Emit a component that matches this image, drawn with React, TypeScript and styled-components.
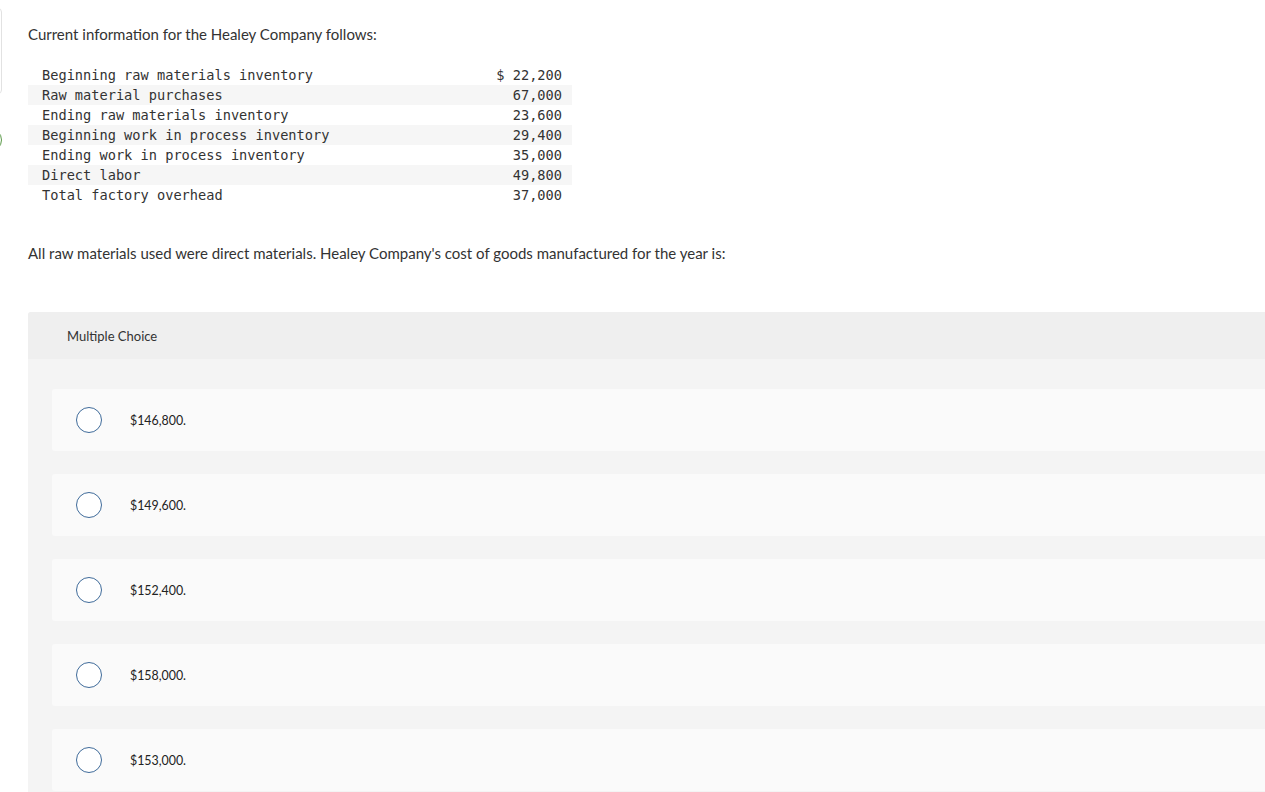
import React from 'react';
import styled, { createGlobalStyle } from 'styled-components';

const GlobalStyle = createGlobalStyle`
  html, body {
    margin: 0;
    padding: 0;
    background: #fff;
    overflow: hidden;
  }
  body {
    font-family: Lato, "Open Sans", sans-serif;
    color: #333;
  }
`;

const rows: [string, string][] = [
  ['Beginning raw materials inventory', '$ 22,200'],
  ['Raw material purchases', '67,000'],
  ['Ending raw materials inventory', '23,600'],
  ['Beginning work in process inventory', '29,400'],
  ['Ending work in process inventory', '35,000'],
  ['Direct labor', '49,800'],
  ['Total factory overhead', '37,000'],
];

const choices = ['$146,800.', '$149,600.', '$152,400.', '$158,000.', '$153,000.'];

export default function App() {
  return (
    <>
      <GlobalStyle />
      <Page>
        <SideRail>
          <RailCard />
          <RailDot />
        </SideRail>
        <Main>
          <Prompt>Current information for the Healey Company follows:</Prompt>
          <DataTable>
            <tbody>
              {rows.map(([label, value], i) => (
                <DataRow key={label} striped={i % 2 === 1}>
                  <LabelCell>{label}</LabelCell>
                  <ValueCell>{value}</ValueCell>
                </DataRow>
              ))}
            </tbody>
          </DataTable>
          <Question>
            All raw materials used were direct materials. Healey Company's cost of goods manufactured for the year is:
          </Question>
          <ChoicePanel>
            <ChoiceHeader>Multiple Choice</ChoiceHeader>
            <ChoiceList>
              {choices.map((c) => (
                <Choice key={c}>
                  <Radio />
                  <ChoiceText>{c}</ChoiceText>
                </Choice>
              ))}
            </ChoiceList>
          </ChoicePanel>
        </Main>
      </Page>
    </>
  );
}

const Page = styled.div`
  display: flex;
  align-items: flex-start;
  min-height: 792px;
`

const SideRail = styled.div`
  width: 40px;
  margin-left: -38px;
  flex-shrink: 0;
  display: flex;
  flex-direction: column;
  align-items: flex-end;
`

const RailCard = styled.div`
  width: 40px;
  height: 86px;
  margin-top: 8px;
  box-sizing: border-box;
  border: 1px solid #e2e2e2;
  border-radius: 4px;
`

const RailDot = styled.div`
  width: 24px;
  height: 24px;
  margin-top: 34px;
  box-sizing: border-box;
  border: 1.5px solid #5c9a4a;
  border-radius: 50%;
`

const Main = styled.div`
  flex: 1;
  padding-left: 26px;
  padding-top: 25px;
`

const Prompt = styled.p`
  margin: 0;
  font-size: 15px;
  line-height: 18px;
  color: #333;
`

const DataTable = styled.table`
  border-collapse: collapse;
  margin-top: 22px;
  width: 544px;
  font-family: "DejaVu Sans Mono", "Liberation Mono", monospace;
  font-size: 13.65px;
  color: #333;
`

const DataRow = styled.tr<{ striped: boolean }>`
  height: 20px;
  background: ${(p) => (p.striped ? '#f6f6f6' : 'transparent')};
`

const LabelCell = styled.td`
  padding: 0 0 0 14px;
  line-height: 20px;
  white-space: pre;
`

const ValueCell = styled.td`
  padding: 0 10px 0 0;
  line-height: 20px;
  text-align: right;
  white-space: pre;
`

const Question = styled.p`
  margin: 39px 0 0;
  font-size: 15px;
  line-height: 18px;
  color: #333;
`

const ChoicePanel = styled.div`
  margin-top: 50px;
  background: #f4f4f4;
  border-top-left-radius: 3px;
  overflow: hidden;
`

const ChoiceHeader = styled.div`
  height: 47px;
  display: flex;
  align-items: center;
  padding-left: 39px;
  background: #efefef;
  font-size: 13px;
  color: #333;
`

const ChoiceList = styled.div`
  display: flex;
  flex-direction: column;
  gap: 23px;
  padding: 30px 0 30px 24px;
`

const Choice = styled.div`
  height: 62px;
  display: flex;
  align-items: center;
  background: #fafafa;
  border-radius: 3px 0 0 3px;
  padding-left: 24px;
`

const Radio = styled.span`
  width: 26px;
  height: 26px;
  box-sizing: border-box;
  border: 1.5px solid #3f6b9a;
  border-radius: 50%;
  background: #fff;
  flex-shrink: 0;
`

const ChoiceText = styled.span`
  margin-left: 28px;
  font-size: 12.4px;
  color: #222;
`
